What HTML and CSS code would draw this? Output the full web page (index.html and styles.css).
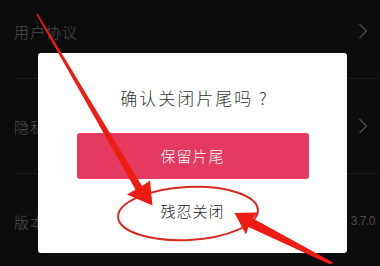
FILE: index.html
```html
<!DOCTYPE html>
<html>
	<head>
		<meta charset="utf-8" />
		<title>设置</title>
		<link rel="stylesheet" href="styles.css">
	</head>
	<body>
		<div id="page">
			<ul class="list">
				<li class="row">
					<span class="label">用户协议</span>
					<svg class="chev" width="10" height="16" viewBox="0 0 10 16"><polyline points="1.5,1 8.5,8 1.5,15" /></svg>
				</li>
				<li class="row">
					<span class="label">隐私政策</span>
					<svg class="chev" width="10" height="16" viewBox="0 0 10 16"><polyline points="1.5,1 8.5,8 1.5,15" /></svg>
				</li>
				<li class="row">
					<span class="label">版本号</span>
					<span class="version">3.7.0</span>
				</li>
			</ul>

			<!--确认弹窗-->
			<div class="dialog">
				<p class="title">确认关闭片尾吗 ?</p>
				<div class="btn-keep">保留片尾</div>
				<div class="btn-close">残忍关闭</div>
			</div>

			<!--红色标注-->
			<svg class="mark" width="380" height="266" viewBox="0 0 380 266">
				<ellipse cx="188" cy="213.5" rx="70" ry="26.5" transform="rotate(-3 188 213.5)" />
				<polygon points="36.3,14.3 37.7,13.7 142,186 150,180.5 152.5,205.5 127,194.5 135.5,189.5" />
				<polygon points="234.5,213 258,212.5 253,218.5 334,263 329,264 248.5,227 246,234.5" />
			</svg>
		</div>
	</body>
</html>
```
FILE: styles.css
```css
*{
	padding: 0;
	margin: 0;
}
ul{
	list-style: none;
}
body{
	background-color: #0c0c0c;
	font-family: "Noto Sans CJK SC", "Noto Sans", sans-serif;
	font-weight: 300;
}
#page{
	width: 380px;
	height: 266px;
	position: relative;
	overflow: hidden;
}
.list{
	margin-top: -16px;
}
.row{
	height: 94px;
	margin-left: 14px;
	padding-right: 12px;
	border-bottom: 1px solid #1b1b1b;
	display: flex;
	align-items: center;
	justify-content: space-between;
}
.label{
	font-size: 15px;
	color: #4e4e4e;
	letter-spacing: 1px;
}
.chev polyline{
	fill: none;
	stroke: #4a4a4a;
	stroke-width: 1.4;
}
.version{
	font-family: "Liberation Sans", sans-serif;
	font-size: 12px;
	color: #4a4a4a;
	margin-right: -7px;
	letter-spacing: -0.5px;
}

/*弹窗*/
.dialog{
	position: absolute;
	left: 38px;
	top: 53px;
	width: 309px;
	height: 200px;
	background-color: #fff;
	border-radius: 3px;
	display: flex;
	flex-direction: column;
	align-items: center;
	padding-top: 34px;
	box-sizing: border-box;
}
.title{
	font-size: 17px;
	line-height: 22px;
	color: #333;
	letter-spacing: 2px;
	margin-left: 4px;
}
.btn-keep{
	margin-top: 24px;
	width: 232px;
	height: 46px;
	line-height: 46px;
	text-align: center;
	background-color: #e53a60;
	border-radius: 3px;
	color: #fff;
	font-size: 15px;
	letter-spacing: 1px;
}
.btn-close{
	margin-top: 21px;
	line-height: 22px;
	font-size: 15px;
	color: #222;
	letter-spacing: 1px;
}
.mark{
	position: absolute;
	left: 0;
	top: 0;
	pointer-events: none;
}
.mark ellipse{
	fill: none;
	stroke: #d62b1f;
	stroke-width: 2;
}
.mark polygon{
	fill: #ee1c12;
}
```
